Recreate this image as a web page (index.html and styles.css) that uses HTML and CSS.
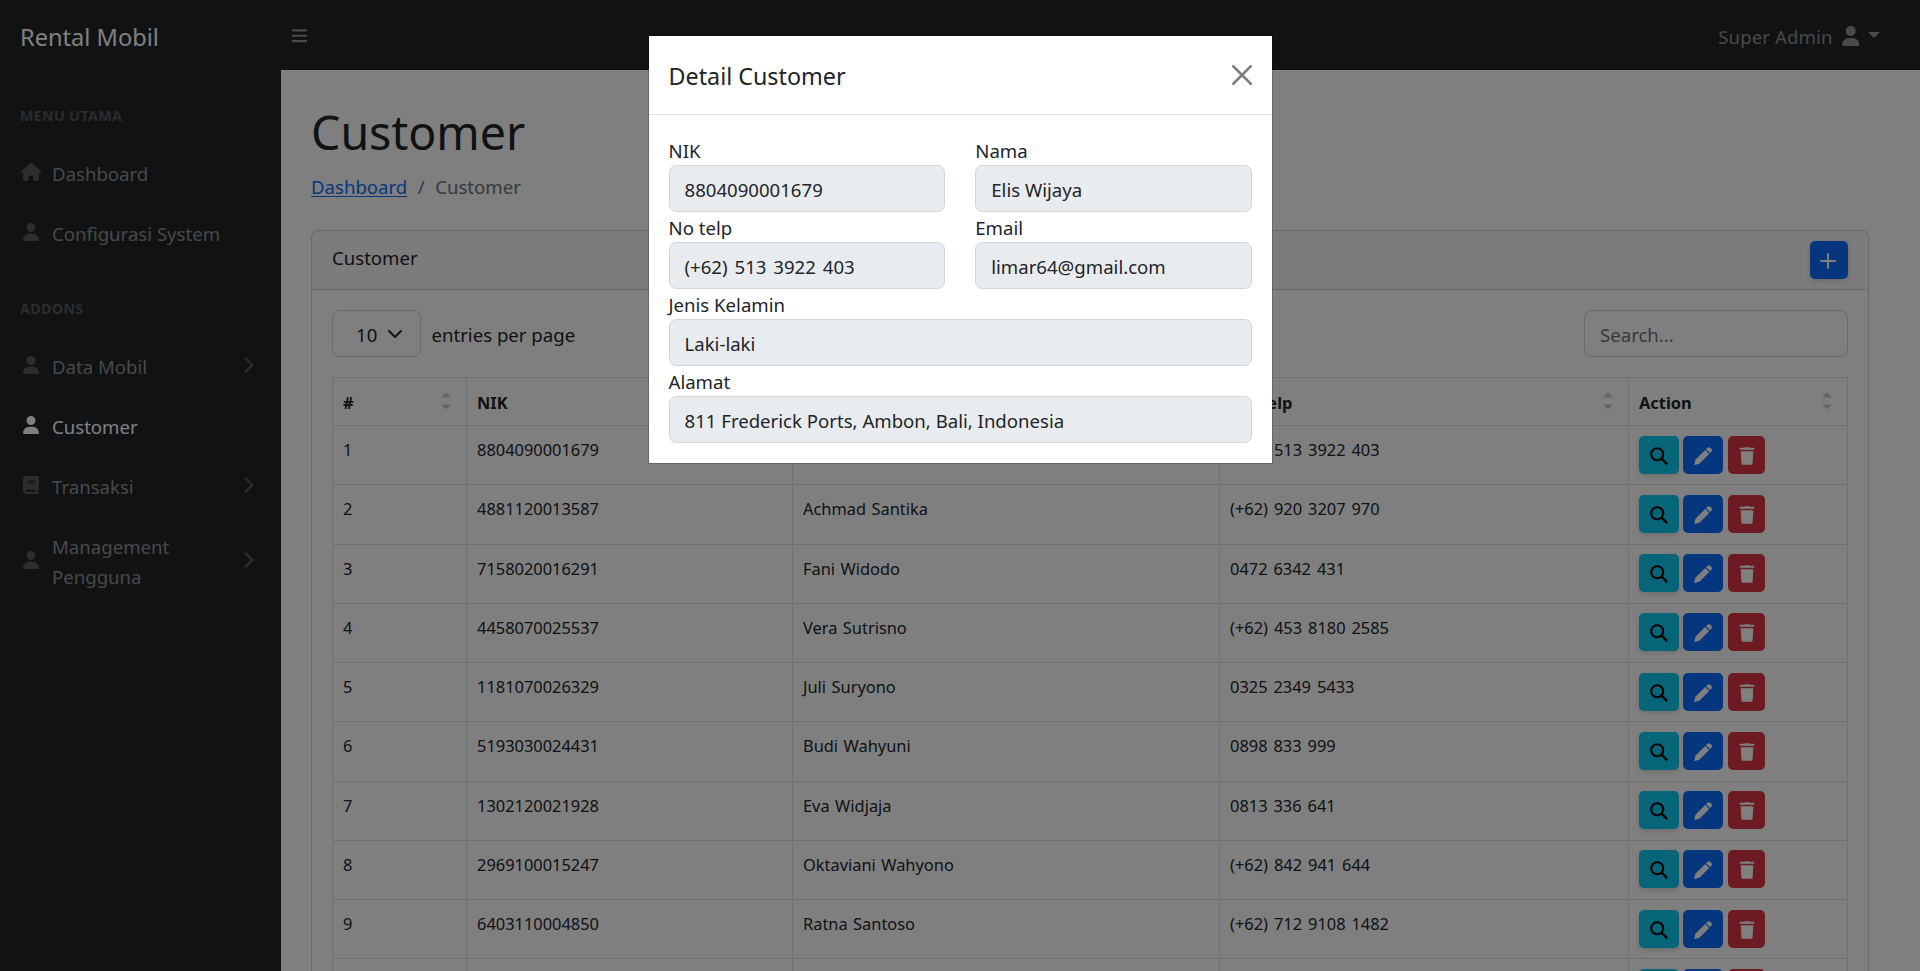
FILE: index.html
```html
<!DOCTYPE html>
<html lang="id">
<head>
<meta charset="utf-8">
<title>Customer - Rental Mobil</title>
<link rel="stylesheet" href="styles.css">
</head>
<body>
<svg class="sprite" aria-hidden="true">
  <symbol id="user" viewBox="0 0 448 512"><path d="M224 256A128 128 0 1 0 224 0a128 128 0 1 0 0 256zm-45.7 48C79.8 304 0 383.8 0 482.3C0 498.7 13.3 512 29.7 512H418.3c16.4 0 29.7-13.3 29.7-29.7C448 383.8 368.2 304 269.7 304H178.3z"/></symbol>
  <symbol id="home" viewBox="0 0 576 512"><path d="M575.8 255.5c0 18-15 32.1-32 32.1h-32l.7 160.2c0 2.7-.2 5.4-.5 8.1V472c0 22.1-17.9 40-40 40H456c-1.1 0-2.2 0-3.3-.1c-1.4 .1-2.8 .1-4.2 .1H416 392c-22.1 0-40-17.9-40-40V448 384c0-17.7-14.3-32-32-32H256c-17.7 0-32 14.3-32 32v64 24c0 22.1-17.9 40-40 40H160 128.1c-1.5 0-3-.1-4.5-.2c-1.2 .1-2.4 .2-3.6 .2H104c-22.1 0-40-17.9-40-40V360c0-.9 0-1.9 .1-2.8V287.6H32c-18 0-32-14-32-32.1c0-9 3-17 10-24L266.4 8c7-7 15-8 22-8s15 2 21 7L564.8 231.5c8 7 12 15 11 24z"/></symbol>
  <symbol id="bars" viewBox="0 0 448 512"><path d="M0 96C0 78.3 14.3 64 32 64H416c17.7 0 32 14.3 32 32s-14.3 32-32 32H32C14.3 128 0 113.7 0 96zM0 256c0-17.7 14.3-32 32-32H416c17.7 0 32 14.3 32 32s-14.3 32-32 32H32c-17.7 0-32-14.3-32-32zM448 416c0 17.7-14.3 32-32 32H32c-17.7 0-32-14.3-32-32s14.3-32 32-32H416c17.7 0 32 14.3 32 32z"/></symbol>
  <symbol id="book" viewBox="0 0 448 512"><path d="M96 0C43 0 0 43 0 96V416c0 53 43 96 96 96H384h32c17.7 0 32-14.3 32-32s-14.3-32-32-32V384c17.7 0 32-14.3 32-32V32c0-17.7-14.3-32-32-32H384 96zm0 384H352v64H96c-17.7 0-32-14.3-32-32s14.3-32 32-32zm32-240c0-8.8 7.2-16 16-16H336c8.8 0 16 7.2 16 16s-7.2 16-16 16H144c-8.8 0-16-7.2-16-16zm16 48H336c8.8 0 16 7.2 16 16s-7.2 16-16 16H144c-8.8 0-16-7.2-16-16s7.2-16 16-16z"/></symbol>
  <symbol id="right" viewBox="0 0 10 16"><path d="M1.7 1.3 8.2 8l-6.5 6.7" fill="none" stroke="currentColor" stroke-width="2.2" stroke-linecap="round" stroke-linejoin="round"/></symbol>
  <symbol id="down" viewBox="0 0 16 16"><path d="m2 5 6 6 6-6" fill="none" stroke="currentColor" stroke-width="2" stroke-linecap="round" stroke-linejoin="round"/></symbol>
  <symbol id="plus" viewBox="0 0 16 16"><path d="M8 1v14M1 8h14" fill="none" stroke="currentColor" stroke-width="1.9" stroke-linecap="round"/></symbol>
  <symbol id="search" viewBox="0 0 18 18"><circle cx="7.2" cy="7.2" r="6" fill="none" stroke="currentColor" stroke-width="2.1"/><path d="m11.3 11.4 5.9 5.7" fill="none" stroke="currentColor" stroke-width="2.3"/></symbol>
  <symbol id="pencil" viewBox="0 0 18 18"><path d="M1.4 12.8 11.2 3l4 3.9-9.9 9.8L.6 18q-.5 0-.3-.5zM12 2.2 13.2 1q1.6-1.5 3.4 0l.5.5q1.6 1.8.2 3.3L16 6.1z"/></symbol>
  <symbol id="trash" viewBox="0 0 16 18"><path d="M5.5.7q.2-.5.7-.5h3.6q.5 0 .7.5h4.2q.6 0 .6.6v1.1q0 .4-.5.4H1.2q-.5 0-.5-.4V1.3q0-.6.6-.6zM1.7 4.2h12.6l-.7 12.4q-.1 1.2-1.2 1.2H3.6q-1.1 0-1.2-1.2z"/></symbol>
  <symbol id="close" viewBox="0 0 16 16"><path d="m1 1 14 14M15 1 1 15" fill="none" stroke="currentColor" stroke-width="2" stroke-linecap="round"/></symbol>
  <symbol id="sort" viewBox="0 0 10 18"><path d="M0 5.5 5 .5l5 5zM0 12.5l5 5 5-5z"/></symbol>
</svg>

<header class="topnav">
  <a class="brand">Rental Mobil</a>
  <svg class="toggle"><use href="#bars"/></svg>
  <div class="account"><span>Super Admin</span><svg class="avatar"><use href="#user"/></svg><i class="caret"></i></div>
</header>

<div class="layout">
  <nav class="sidebar">
    <div class="heading">MENU UTAMA</div>
    <a class="link"><svg class="nav-icon"><use href="#home"/></svg><span>Dashboard</span></a>
    <a class="link"><svg class="nav-icon"><use href="#user"/></svg><span>Configurasi System</span></a>
    <div class="heading">ADDONS</div>
    <a class="link"><svg class="nav-icon"><use href="#user"/></svg><span>Data Mobil</span><svg class="arrow"><use href="#right"/></svg></a>
    <a class="link active"><svg class="nav-icon"><use href="#user"/></svg><span>Customer</span></a>
    <a class="link"><svg class="nav-icon"><use href="#book"/></svg><span>Transaksi</span><svg class="arrow"><use href="#right"/></svg></a>
    <a class="link"><svg class="nav-icon"><use href="#user"/></svg><span>Management Pengguna</span><svg class="arrow"><use href="#right"/></svg></a>
  </nav>

  <main class="content">
    <h1 class="title">Customer</h1>
    <div class="breadcrumb"><a class="crumb-link">Dashboard</a><span class="slash">/</span><span>Customer</span></div>
    <section class="card">
      <div class="card-header"><span>Customer</span><button class="btn add"><svg><use href="#plus"/></svg></button></div>
      <div class="card-body">
        <div class="tools">
          <div class="select"><span>10</span><svg><use href="#down"/></svg></div>
          <span class="per-page">entries per page</span>
          <div class="search">Search...</div>
        </div>
        <table class="table">
          <colgroup><col class="c-no"><col class="c-nik"><col class="c-name"><col class="c-tel"><col class="c-act"></colgroup>
          <thead>
            <tr>
              <th><div class="th"><span>#</span><svg><use href="#sort"/></svg></div></th>
              <th><div class="th"><span>NIK</span><svg><use href="#sort"/></svg></div></th>
              <th><div class="th"><span>Nama</span><svg><use href="#sort"/></svg></div></th>
              <th><div class="th"><span>No Telp</span><svg><use href="#sort"/></svg></div></th>
              <th><div class="th"><span>Action</span><svg><use href="#sort"/></svg></div></th>
            </tr>
          </thead>
          <tbody>
            <tr><td>1</td><td>8804090001679</td><td>Elis Wijaya</td><td>(+62) 513 3922 403</td><td><div class="actions"><button class="btn info"><svg><use href="#search"/></svg></button><button class="btn edit"><svg><use href="#pencil"/></svg></button><button class="btn delete"><svg><use href="#trash"/></svg></button></div></td></tr>
            <tr><td>2</td><td>4881120013587</td><td>Achmad Santika</td><td>(+62) 920 3207 970</td><td><div class="actions"><button class="btn info"><svg><use href="#search"/></svg></button><button class="btn edit"><svg><use href="#pencil"/></svg></button><button class="btn delete"><svg><use href="#trash"/></svg></button></div></td></tr>
            <tr><td>3</td><td>7158020016291</td><td>Fani Widodo</td><td>0472 6342 431</td><td><div class="actions"><button class="btn info"><svg><use href="#search"/></svg></button><button class="btn edit"><svg><use href="#pencil"/></svg></button><button class="btn delete"><svg><use href="#trash"/></svg></button></div></td></tr>
            <tr><td>4</td><td>4458070025537</td><td>Vera Sutrisno</td><td>(+62) 453 8180 2585</td><td><div class="actions"><button class="btn info"><svg><use href="#search"/></svg></button><button class="btn edit"><svg><use href="#pencil"/></svg></button><button class="btn delete"><svg><use href="#trash"/></svg></button></div></td></tr>
            <tr><td>5</td><td>1181070026329</td><td>Juli Suryono</td><td>0325 2349 5433</td><td><div class="actions"><button class="btn info"><svg><use href="#search"/></svg></button><button class="btn edit"><svg><use href="#pencil"/></svg></button><button class="btn delete"><svg><use href="#trash"/></svg></button></div></td></tr>
            <tr><td>6</td><td>5193030024431</td><td>Budi Wahyuni</td><td>0898 833 999</td><td><div class="actions"><button class="btn info"><svg><use href="#search"/></svg></button><button class="btn edit"><svg><use href="#pencil"/></svg></button><button class="btn delete"><svg><use href="#trash"/></svg></button></div></td></tr>
            <tr><td>7</td><td>1302120021928</td><td>Eva Widjaja</td><td>0813 336 641</td><td><div class="actions"><button class="btn info"><svg><use href="#search"/></svg></button><button class="btn edit"><svg><use href="#pencil"/></svg></button><button class="btn delete"><svg><use href="#trash"/></svg></button></div></td></tr>
            <tr><td>8</td><td>2969100015247</td><td>Oktaviani Wahyono</td><td>(+62) 842 941 644</td><td><div class="actions"><button class="btn info"><svg><use href="#search"/></svg></button><button class="btn edit"><svg><use href="#pencil"/></svg></button><button class="btn delete"><svg><use href="#trash"/></svg></button></div></td></tr>
            <tr><td>9</td><td>6403110004850</td><td>Ratna Santoso</td><td>(+62) 712 9108 1482</td><td><div class="actions"><button class="btn info"><svg><use href="#search"/></svg></button><button class="btn edit"><svg><use href="#pencil"/></svg></button><button class="btn delete"><svg><use href="#trash"/></svg></button></div></td></tr>
            <tr><td></td><td></td><td></td><td></td><td><div class="actions"><button class="btn info"><svg><use href="#search"/></svg></button><button class="btn edit"><svg><use href="#pencil"/></svg></button><button class="btn delete"><svg><use href="#trash"/></svg></button></div></td></tr>
          </tbody>
        </table>
      </div>
    </section>
  </main>
</div>

<div class="backdrop">
  <div class="modal">
    <div class="modal-header"><h5 class="modal-title">Detail Customer</h5><svg class="close"><use href="#close"/></svg></div>
    <div class="modal-body">
      <div class="field"><label>NIK</label><div class="input">8804090001679</div></div>
      <div class="field"><label>Nama</label><div class="input">Elis Wijaya</div></div>
      <div class="field"><label>No telp</label><div class="input phone">(+62) 513 3922 403</div></div>
      <div class="field"><label>Email</label><div class="input">limar64@gmail.com</div></div>
      <div class="field wide"><label>Jenis Kelamin</label><div class="input">Laki-laki</div></div>
      <div class="field wide"><label>Alamat</label><div class="input">811 Frederick Ports, Ambon, Bali, Indonesia</div></div>
    </div>
  </div>
</div>
</body>
</html>
```
FILE: styles.css
```css
* { box-sizing: border-box; }
html, body { height: 971px; overflow: hidden; }
body { margin: 0; background: #fff; color: #212529; font: 18.6px/30px "Noto Sans", "Open Sans", sans-serif; }
svg { fill: currentColor; flex: none; display: block; }
.sprite { position: absolute; width: 0; height: 0; }

.topnav { height: 70px; background: #212529; display: flex; align-items: center; padding-right: 40px; color: rgba(255,255,255,.5); }
.brand { width: 292px; padding: 4px 0 0 20px; font-size: 23.6px; line-height: 38px; color: #fff; }
.toggle { width: 15.3px; height: 17.5px; margin-top: 1px; }
.account { margin-left: auto; display: flex; align-items: center; }
.account span { padding-top: 3px; letter-spacing: .1px; }
.avatar { width: 17.5px; height: 20px; margin: 2px 9px 0 9px; }
.caret { border: 6px solid transparent; border-top-color: currentColor; border-bottom: 0; }

.layout { display: flex; height: 901px; }
.sidebar { width: 281px; flex: none; background: #212529; color: rgba(255,255,255,.5); }
.heading { padding: 35px 20px 15px; font-size: 14.2px; font-weight: 700; line-height: 22.5px; letter-spacing: .4px; color: rgba(255,255,255,.25); }
.link { display: flex; align-items: center; padding: 16.5px 31px 13.5px 20px; }
.link span { flex: 1; }
.nav-icon { width: 22px; height: 18px; margin: -3.5px 10px 0 0; color: rgba(255,255,255,.25); }
.arrow { width: 10px; height: 16px; margin: -3.5px -4px 0 0; color: rgba(255,255,255,.25); }
.active, .active .nav-icon { color: #fff; }

.content { flex: 1; padding: 30px 51px 0 30px; overflow: hidden; }
.title { margin: 0 0 10px; padding-top: 2px; height: 60px; font-size: 46.5px; line-height: 60px; font-weight: 400; }
.breadcrumb { display: flex; height: 30px; padding-top: 2px; margin-bottom: 30px; color: #6c757d; }
.crumb-link { color: #0d6efd; text-decoration: underline; text-underline-offset: 2px; text-decoration-thickness: 1px; }
.slash { margin: 0 10.5px; }
.card { height: 900px; border: 1px solid rgba(0,0,0,.175); border-radius: 7.5px; }
.card-header { height: 59px; display: flex; justify-content: space-between; padding: 10px 20px; background: rgba(33,37,41,.03); border-bottom: 1px solid rgba(0,0,0,.175); }
.card-header span { padding-top: 2px; }
.btn { display: grid; place-items: center; height: 38px; padding: 0; border: 0; border-radius: 5px; color: #fff; }
.add { width: 38px; background: #0d6efd; box-shadow: 0 2px 5px rgba(0,0,0,.15); }
.add svg { width: 16px; height: 16px; margin: 2px 2px 0 0; }
.card-body { padding: 20px; }
.tools { display: flex; margin-bottom: 20px; }
.select, .search { height: 47px; border: 1px solid #ced4da; border-radius: 7.5px; padding: 9px 15px 0; }
.select { width: 89px; padding-left: 23px; display: flex; }
.select svg { width: 16px; height: 16px; margin: 6px 0 0 10px; }
.per-page { padding: 10px 0 0 10.5px; }
.search { width: 264px; margin-left: auto; color: #6c757d; }
.table { width: 1515px; table-layout: fixed; border-collapse: collapse; font-size: 16.4px; line-height: 26px; word-spacing: 1.2px; }
.c-no { width: 134px; }
.c-nik { width: 326px; }
.c-name { width: 427px; }
.c-tel { width: 409px; }
.c-act { width: 219px; }
th, td { border: 1px solid #dee2e6; padding: 11px 10px 0; text-align: left; vertical-align: top; }
th { height: 48px; padding-top: 12px; }
td { height: 59.25px; }
td:nth-child(4) { word-spacing: 1.7px; }
td:last-child { padding-top: 9.6px; }
.th { display: flex; justify-content: space-between; }
.th svg { width: 10px; height: 18px; margin: 2px 5px 0 0; opacity: .2; color: #000; }
.actions { display: flex; }
.info { width: 40px; margin-right: 4px; background: #0dcaf0; color: #000; box-shadow: 0 2px 5px rgba(0,0,0,.15); }
.edit { width: 40px; margin-right: 5px; background: #0d6efd; }
.delete { width: 37px; background: #dc3545; }
.actions svg { width: 18px; height: 18px; margin-top: 2px; }
.info svg { margin-right: 1px; }

.backdrop { position: absolute; inset: 0; background: rgba(0,0,0,.5); }
.modal { width: 625px; height: 429px; margin: 35px auto 0 648px; background: #fff; background-clip: padding-box; border: 1px solid rgba(0,0,0,.175); }
.modal-header { height: 79px; display: flex; justify-content: space-between; align-items: center; padding: 0 20px 0 19.5px; border-bottom: 1px solid #dee2e6; }
.modal-title { margin: 0; padding-top: 1px; font-size: 23.3px; font-weight: 400; line-height: 38px; }
.close { width: 20px; height: 20px; opacity: .5; margin-top: -1px; color: #000; }
.modal-body { display: grid; grid-template-columns: 1fr 1fr; column-gap: 30px; padding: 20px 20px 20px 19.5px; }
.wide { grid-column: 1 / -1; }
.field { height: 77px; }
.field label { display: block; height: 30px; padding-top: 1px; }
.input { height: 47px; padding: 8.5px 15px 0; border: 1px solid #ced4da; border-radius: 7.5px; background: #e9ecef; }
.phone { word-spacing: 2.1px; }
```
